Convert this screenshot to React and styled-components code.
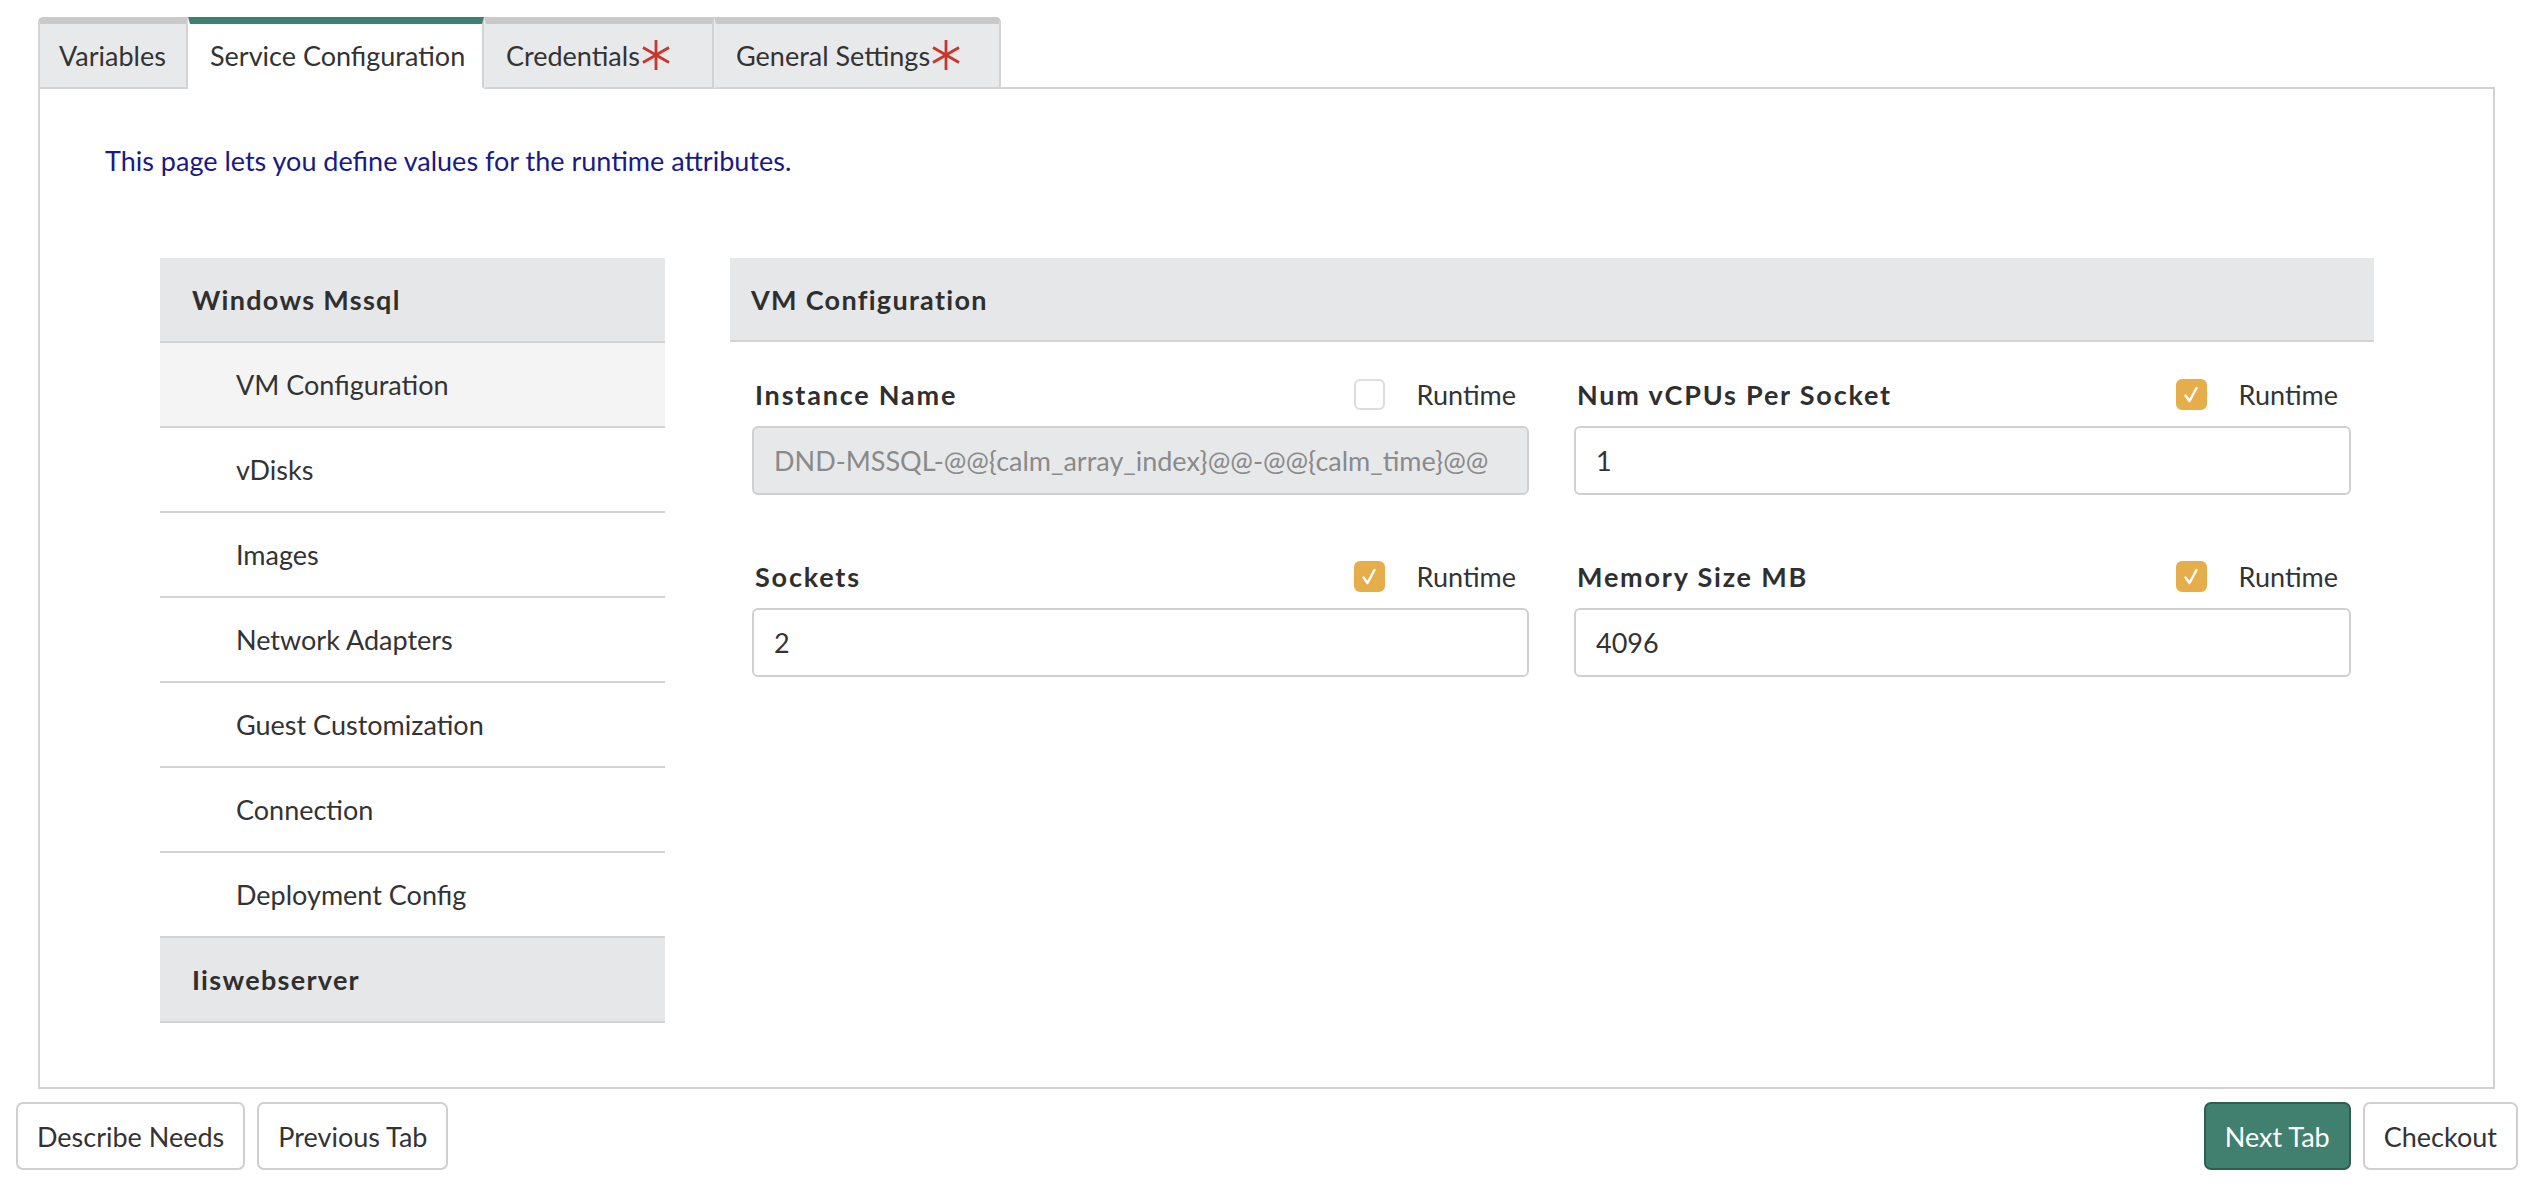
import React from "react";
import styled, { createGlobalStyle } from "styled-components";

const GlobalStyle = createGlobalStyle`
  html, body { margin: 0; padding: 0; background: #ffffff; }
  body {
    font-family: Lato, "Open Sans", "Noto Sans", sans-serif;
    color: #333333;
    font-size: 27px;
  }
  * { box-sizing: border-box; }
`;

const Page = styled.div`
  padding: 17px 14px 13px 16px;
`;

const Workspace = styled.div`
  margin: 0 23px 0 22px;
`;

const TabStrip = styled.div`
  display: flex;
  align-items: stretch;
  margin-bottom: -2px;
  position: relative;
  z-index: 1;
`;

const Tab = styled.div`
  width: ${(p) => p.$w}px;
  height: 72px;
  display: flex;
  align-items: center;
  justify-content: flex-start;
  padding-left: ${(p) => (p.$first ? 19 : 20)}px;
  font-size: 27px;
  color: #333;
  background: ${(p) => (p.$active ? "#ffffff" : "#e8e9eb")};
  border-top: 7px solid ${(p) => (p.$active ? "#3f7f71" : "#c9c9c9")};
  border-left: 2px solid ${(p) => (p.$first ? "#d3d3d3" : "transparent")};
  border-right: 2px solid #d3d3d3;
  border-bottom: 2px solid ${(p) => (p.$active ? "#ffffff" : "#d3d3d3")};
  border-top-left-radius: ${(p) => (p.$first ? "5px" : "0")};
  border-top-right-radius: ${(p) => (p.$last ? "5px" : "0")};
`;

const ContentBox = styled.div`
  border: 2px solid #d3d3d3;
  padding: 52px 119px 64px 65px;
  background: #fff;
`;

const Description = styled.p`
  margin: 0;
  color: #1a1a85;
  font-size: 27px;
  line-height: 40px;
`;

const Main = styled.div`
  margin: 77px 0 0 55px;
  display: grid;
  grid-template-columns: 505px 1fr;
  column-gap: 65px;
  align-items: start;
`;

const Nav = styled.div`
  display: flex;
  flex-direction: column;
`;

const NavHeader = styled.div`
  height: 85px;
  display: flex;
  align-items: center;
  padding-left: 32px;
  font-size: 27px;
  font-weight: 700;
  letter-spacing: 1.3px;
  color: #2f2f2f;
  background: #e6e7e9;
  border-bottom: 2px solid #d3d3d3;
`;

const NavItem = styled.div`
  height: 85px;
  display: flex;
  align-items: center;
  padding-left: 76px;
  font-size: 27px;
  color: #333;
  background: ${(p) => (p.$active ? "#f4f4f4" : "#ffffff")};
  border-bottom: 2px solid #d3d3d3;
`;

const Panel = styled.div`
  display: flex;
  flex-direction: column;
`;

const PanelHeader = styled.div`
  height: 84px;
  display: flex;
  align-items: center;
  padding-left: 21px;
  font-size: 27px;
  font-weight: 700;
  letter-spacing: 1.3px;
  color: #2f2f2f;
  background: #e6e7e9;
  border-bottom: 2px solid #d3d3d3;
`;

const FieldGrid = styled.div`
  display: grid;
  grid-template-columns: 1fr 1fr;
  column-gap: 45px;
  row-gap: 66px;
  padding: 37px 23px 0 22px;
`;

const Field = styled.div`
  display: flex;
  flex-direction: column;
  gap: 16px;
`;

const LabelRow = styled.div`
  display: flex;
  align-items: center;
  height: 31px;
`;

const Label = styled.div`
  flex: 1;
  padding-left: 3px;
  font-size: 27px;
  font-weight: 700;
  letter-spacing: 1.8px;
  color: #2f2f2f;
`;

const CheckBox = styled.span`
  width: 31px;
  height: 31px;
  border-radius: 6px;
  display: inline-flex;
  align-items: center;
  justify-content: center;
  background: ${(p) => (p.$checked ? "#e6ad4b" : "#ffffff")};
  border: 2px solid ${(p) => (p.$checked ? "#e6ad4b" : "#dddddd")};
`;

const RuntimeText = styled.span`
  margin-left: 32px;
  margin-right: 13px;
  font-size: 27px;
  color: #333;
`;

const Input = styled.div`
  height: 69px;
  display: flex;
  align-items: center;
  padding: 0 20px;
  border: 2px solid #d0d0d0;
  border-radius: 6px;
  font-size: 27px;
  white-space: nowrap;
  overflow: hidden;
  color: ${(p) => (p.$disabled ? "#8a8a8a" : "#333")};
  background: ${(p) => (p.$disabled ? "#e7e8ea" : "#ffffff")};
`;

const Footer = styled.div`
  display: flex;
  justify-content: space-between;
  margin-top: 13px;
`;

const ButtonGroup = styled.div`
  display: flex;
  gap: 12px;
`;

const Button = styled.button`
  height: 68px;
  padding: 0 19px;
  font-family: inherit;
  font-size: 27px;
  border-radius: 7px;
  cursor: pointer;
  color: ${(p) => (p.$primary ? "#ffffff" : "#333")};
  background: ${(p) => (p.$primary ? "#41806f" : "#ffffff")};
  border: 2px solid ${(p) => (p.$primary ? "#2e5d52" : "#cfcfcf")};
`;

const Asterisk = () => (
  <svg width="32" height="32" viewBox="0 0 32 32" style={{ marginTop: -2 }}>
    <g stroke="#c9372c" strokeWidth="2.8" strokeLinecap="butt">
      <line x1="16" y1="1" x2="16" y2="31" />
      <line x1="3" y1="8.5" x2="29" y2="23.5" />
      <line x1="3" y1="23.5" x2="29" y2="8.5" />
    </g>
  </svg>
);

const Check = () => (
  <svg width="20" height="20" viewBox="0 0 20 20">
    <polyline
      points="4.5,10.5 8.5,16 15.5,3"
      fill="none"
      stroke="#ffffff"
      strokeWidth="2.4"
      strokeLinecap="round"
      strokeLinejoin="round"
    />
  </svg>
);

const tabs = [
  { label: "Variables", w: 150 },
  { label: "Service Configuration", w: 296, active: true },
  { label: "Credentials", w: 230, required: true },
  { label: "General Settings", w: 287, required: true },
];

const navItems = [
  "VM Configuration",
  "vDisks",
  "Images",
  "Network Adapters",
  "Guest Customization",
  "Connection",
  "Deployment Config",
];

const fields = [
  {
    label: "Instance Name",
    value: "DND-MSSQL-@@{calm_array_index}@@-@@{calm_time}@@",
    checked: false,
    disabled: true,
  },
  { label: "Num vCPUs Per Socket", value: "1", checked: true },
  { label: "Sockets", value: "2", checked: true },
  { label: "Memory Size MB", value: "4096", checked: true },
];

export default function App() {
  return (
    <>
      <GlobalStyle />
      <Page>
        <Workspace>
          <TabStrip>
            {tabs.map((t, i) => (
              <Tab
                key={t.label}
                $w={t.w}
                $active={t.active}
                $first={i === 0}
                $last={i === tabs.length - 1}
              >
                {t.label}
                {t.required && <Asterisk />}
              </Tab>
            ))}
          </TabStrip>
          <ContentBox>
            <Description>
              This page lets you define values for the runtime attributes.
            </Description>
            <Main>
              <Nav>
                <NavHeader>Windows Mssql</NavHeader>
                {navItems.map((n, i) => (
                  <NavItem key={n} $active={i === 0}>
                    {n}
                  </NavItem>
                ))}
                <NavHeader>Iiswebserver</NavHeader>
              </Nav>
              <Panel>
                <PanelHeader>VM Configuration</PanelHeader>
                <FieldGrid>
                  {fields.map((f) => (
                    <Field key={f.label}>
                      <LabelRow>
                        <Label>{f.label}</Label>
                        <CheckBox $checked={f.checked}>
                          {f.checked && <Check />}
                        </CheckBox>
                        <RuntimeText>Runtime</RuntimeText>
                      </LabelRow>
                      <Input $disabled={f.disabled}>{f.value}</Input>
                    </Field>
                  ))}
                </FieldGrid>
              </Panel>
            </Main>
          </ContentBox>
        </Workspace>
        <Footer>
          <ButtonGroup>
            <Button>Describe Needs</Button>
            <Button>Previous Tab</Button>
          </ButtonGroup>
          <ButtonGroup>
            <Button $primary>Next Tab</Button>
            <Button>Checkout</Button>
          </ButtonGroup>
        </Footer>
      </Page>
    </>
  );
}
